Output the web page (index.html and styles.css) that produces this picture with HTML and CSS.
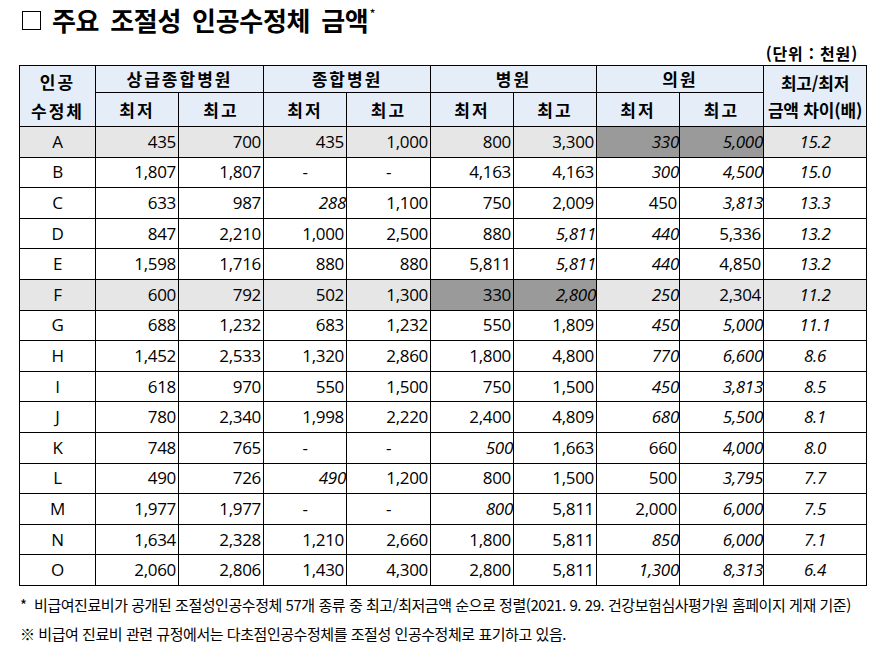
FILE: index.html
```html
<!DOCTYPE html>
<html lang="ko">
<head>
<meta charset="utf-8">
<title>주요 조절성 인공수정체 금액</title>
<link rel="stylesheet" href="styles.css">
</head>
<body>
<div class="page">
  <h1 class="title"><span class="box"></span><span class="title-text">주요 조절성 인공수정체 금액<sup>*</sup></span></h1>
  <div class="unit">(단위 : 천원)</div>
  <table class="grid">
    <colgroup>
      <col style="width:76px"><col style="width:83px"><col style="width:85px"><col style="width:83px"><col style="width:84px"><col style="width:83px"><col style="width:83px"><col style="width:83px"><col style="width:84px"><col style="width:103px">
    </colgroup>
    <thead>
      <tr class="h1">
        <th rowspan="2" class="two">인공<br>수정체</th>
        <th colspan="2">상급종합병원</th>
        <th colspan="2">종합병원</th>
        <th colspan="2">병원</th>
        <th colspan="2">의원</th>
        <th rowspan="2" class="ratio-h">최고/최저<br>금액 차이(배)</th>
      </tr>
      <tr class="h2">
        <th>최저</th><th>최고</th>
        <th>최저</th><th>최고</th>
        <th>최저</th><th>최고</th>
        <th>최저</th><th>최고</th>
      </tr>
    </thead>
    <tbody>
      <tr class="hl"><td class="n">A</td><td>435</td><td>700</td><td>435</td><td>1,000</td><td>800</td><td>3,300</td><td class="i d">330</td><td class="i d">5,000</td><td class="r">15.2</td></tr>
      <tr><td class="n">B</td><td>1,807</td><td>1,807</td><td class="c">-</td><td class="c">-</td><td>4,163</td><td>4,163</td><td class="i">300</td><td class="i">4,500</td><td class="r">15.0</td></tr>
      <tr><td class="n">C</td><td>633</td><td>987</td><td class="i">288</td><td>1,100</td><td>750</td><td>2,009</td><td>450</td><td class="i">3,813</td><td class="r">13.3</td></tr>
      <tr><td class="n">D</td><td>847</td><td>2,210</td><td>1,000</td><td>2,500</td><td>880</td><td class="i">5,811</td><td class="i">440</td><td>5,336</td><td class="r">13.2</td></tr>
      <tr><td class="n">E</td><td>1,598</td><td>1,716</td><td>880</td><td>880</td><td>5,811</td><td class="i">5,811</td><td class="i">440</td><td>4,850</td><td class="r">13.2</td></tr>
      <tr class="hl"><td class="n">F</td><td>600</td><td>792</td><td>502</td><td>1,300</td><td class="d">330</td><td class="i d">2,800</td><td class="i">250</td><td>2,304</td><td class="r">11.2</td></tr>
      <tr><td class="n">G</td><td>688</td><td>1,232</td><td>683</td><td>1,232</td><td>550</td><td>1,809</td><td class="i">450</td><td class="i">5,000</td><td class="r">11.1</td></tr>
      <tr><td class="n">H</td><td>1,452</td><td>2,533</td><td>1,320</td><td>2,860</td><td>1,800</td><td>4,800</td><td class="i">770</td><td class="i">6,600</td><td class="r">8.6</td></tr>
      <tr><td class="n">I</td><td>618</td><td>970</td><td>550</td><td>1,500</td><td>750</td><td>1,500</td><td class="i">450</td><td class="i">3,813</td><td class="r">8.5</td></tr>
      <tr><td class="n">J</td><td>780</td><td>2,340</td><td>1,998</td><td>2,220</td><td>2,400</td><td>4,809</td><td class="i">680</td><td class="i">5,500</td><td class="r">8.1</td></tr>
      <tr><td class="n">K</td><td>748</td><td>765</td><td class="c">-</td><td class="c">-</td><td class="i">500</td><td>1,663</td><td>660</td><td class="i">4,000</td><td class="r">8.0</td></tr>
      <tr><td class="n">L</td><td>490</td><td>726</td><td class="i">490</td><td>1,200</td><td>800</td><td>1,500</td><td>500</td><td class="i">3,795</td><td class="r">7.7</td></tr>
      <tr><td class="n">M</td><td>1,977</td><td>1,977</td><td class="c">-</td><td class="c">-</td><td class="i">800</td><td>5,811</td><td>2,000</td><td class="i">6,000</td><td class="r">7.5</td></tr>
      <tr><td class="n">N</td><td>1,634</td><td>2,328</td><td>1,210</td><td>2,660</td><td>1,800</td><td>5,811</td><td class="i">850</td><td class="i">6,000</td><td class="r">7.1</td></tr>
      <tr><td class="n">O</td><td>2,060</td><td>2,806</td><td>1,430</td><td>4,300</td><td>2,800</td><td>5,811</td><td class="i">1,300</td><td class="i">8,313</td><td class="r">6.4</td></tr>
    </tbody>
  </table>
  <p class="note note1">*&nbsp; 비급여진료비가 공개된 조절성인공수정체 57개 종류 중 최고/최저금액 순으로 정렬(2021. 9. 29. 건강보험심사평가원 홈페이지 게재 기준)</p>
  <p class="note note2">※ 비급여 진료비 관련 규정에서는 다초점인공수정체를 조절성 인공수정체로 표기하고 있음.</p>
</div>
</body>
</html>
```

FILE: styles.css
```css
html, body {
  margin: 0;
  padding: 0;
  background: #ffffff;
}

body {
  font-family: "Noto Sans CJK KR", "Noto Sans", sans-serif;
  color: #000000;
}

.page {
  width: 847px;
  padding: 0 14px 0 19px;
}

.title {
  margin: 6px 0 0 0;
  height: 28px;
  display: flex;
  align-items: center;
  font-size: 26px;
  line-height: 28px;
  font-weight: 700;
  padding-left: 3px;
}

.box {
  display: inline-block;
  width: 17px;
  height: 17px;
  border: 1.5px solid #000;
  margin-right: 11px;
  flex: none;
}

.title-text {
  word-spacing: 4px;
  letter-spacing: -0.3px;
}

.title-text sup {
  font-size: 13px;
  font-weight: 400;
  vertical-align: 12px;
  line-height: 0;
  margin-left: 1px;
}

.unit {
  margin-top: 10px;
  height: 18px;
  line-height: 18px;
  text-align: right;
  padding-right: 8px;
  font-size: 16px;
  font-weight: 700;
  letter-spacing: 0.8px;
}

.grid {
  margin-top: 3px;
  width: 847px;
  table-layout: fixed;
  border-collapse: collapse;
  border: 1.5px solid #000;
}

.grid th,
.grid td {
  border: 1px solid #000;
  padding: 0;
}

.grid th {
  background: #e5edf8;
  font-size: 17px;
  font-weight: 700;
  letter-spacing: 2px;
  text-align: center;
  vertical-align: middle;
  line-height: 22px;
}

.grid .h1 {
  height: 27px;
}

.grid .h2 {
  height: 34px;
}

.grid th.two {
  line-height: 29px;
}

.grid th.ratio-h {
  font-size: 17px;
  letter-spacing: -0.2px;
  line-height: 27px;
}

.grid td {
  font-family: "Open Sans", "Noto Sans CJK KR", sans-serif;
  font-size: 17px;
  text-align: right;
  padding-right: 2px;
  line-height: 20px;
  vertical-align: middle;
  letter-spacing: -0.3px;
}

.grid tbody tr {
  height: 30.6px;
}

.grid tr.hl td {
  background: #e6e6e6;
}

.grid tr.hl td.d {
  background: #9a9a9a;
}

.grid td.i {
  font-style: italic;
  padding-right: 0;
}

.grid td.c {
  text-align: center;
  padding-right: 0;
}

.grid td.n {
  text-align: center;
  padding-right: 0;
}

.grid td.r {
  text-align: center;
  font-style: italic;
  padding-right: 0;
}

.note {
  margin: 0;
  font-size: 15px;
  line-height: 29px;
  white-space: nowrap;
  padding-left: 1px;
  letter-spacing: -0.45px;
}

.note1 {
  margin-top: 4px;
}
```
